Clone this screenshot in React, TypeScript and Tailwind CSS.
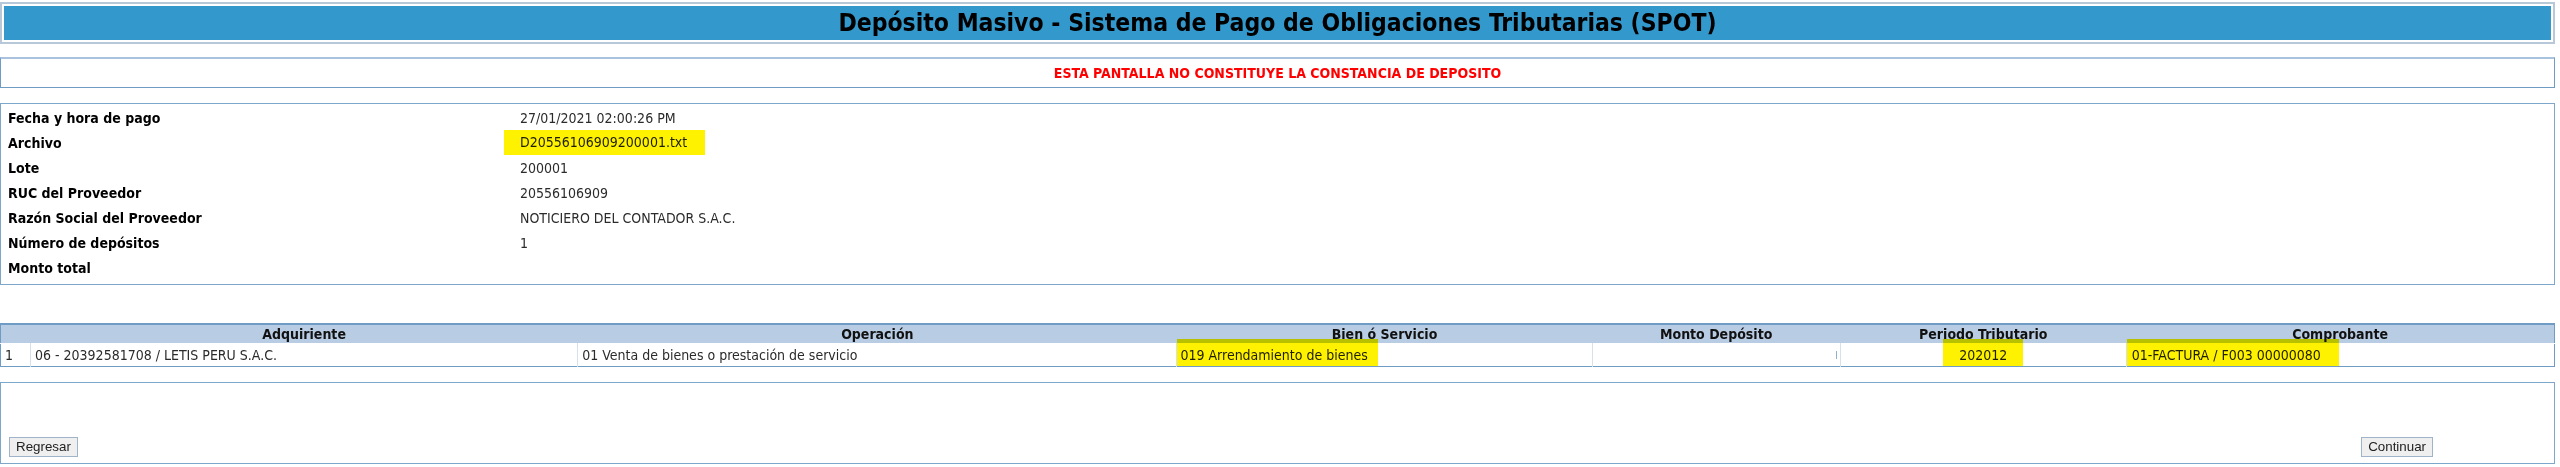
import type { ReactNode } from 'react'

const FONT = '"DejaVu Sans Condensed", "DejaVu Sans", sans-serif'

const INFO_ROWS: { label: string; value: string; mark?: boolean }[] = [
  { label: 'Fecha y hora de pago', value: '27/01/2021 02:00:26 PM' },
  { label: 'Archivo', value: 'D20556106909200001.txt', mark: true },
  { label: 'Lote', value: '200001' },
  { label: 'RUC del Proveedor', value: '20556106909' },
  { label: 'Razón Social del Proveedor', value: 'NOTICIERO DEL CONTADOR S.A.C.' },
  { label: 'Número de depósitos', value: '1' },
  { label: 'Monto total', value: '' },
]

const COLS = [
  { title: '', width: 30 },
  { title: 'Adquiriente', width: 547 },
  { title: 'Operación', width: 599 },
  { title: 'Bien ó Servicio', width: 415 },
  { title: 'Monto Depósito', width: 248 },
  { title: 'Periodo Tributario', width: 286 },
  { title: 'Comprobante', width: 428 },
]

// yellow highlighter mark drawn over the screenshot
function Mark({ children, className }: { children: ReactNode; className?: string }) {
  return (
    <span className={`relative inline-block bg-[#fff200] mix-blend-multiply text-[#1f1f00] ${className ?? ''}`}>
      {children}
    </span>
  )
}

function Button({ children }: { children: ReactNode }) {
  return (
    <button
      type="button"
      className="h-[20px] border border-[#9fb4c9] bg-[#efefef] px-[6px] text-[13.33px] leading-[18px] text-[#222]"
      style={{ fontFamily: '"Liberation Sans", Arial, sans-serif' }}
    >
      {children}
    </button>
  )
}

export default function App() {
  return (
    <div className="w-[2555px] bg-white pt-[2px] text-[14px] text-[#2b2b2b]" style={{ fontFamily: FONT }}>
      <div className="border-2 border-[#b7c8d9] p-[2px]">
        <div className="flex h-[34px] items-center justify-center bg-[#3399cc]">
          <h1 className="text-[24.5px] font-bold leading-none text-black">
            Depósito Masivo - Sistema de Pago de Obligaciones Tributarias (SPOT)
          </h1>
        </div>
      </div>

      <div className="mt-[13px] flex h-[31px] items-center justify-center border border-t-2 border-[#6f9cc5] border-t-[#a9c3de]">
        <span className="text-[14px] font-bold text-[#ff0000]">
          ESTA PANTALLA NO CONSTITUYE LA CONSTANCIA DE DEPOSITO
        </span>
      </div>

      <div className="mt-[15px] border border-[#7ea7cc] pb-[3px] pl-[7px] pt-[2px]">
        {INFO_ROWS.map((r) => (
          <div key={r.label} className="grid h-[25px] grid-cols-[512px_1fr] items-center">
            <span className="font-bold text-black">{r.label}</span>
            <span>
              {r.mark ? (
                <Mark className="-ml-[16px] -mt-[2px] h-[25px] pl-[16px] pr-[18px] leading-[25px]">{r.value}</Mark>
              ) : (
                r.value
              )}
            </span>
          </div>
        ))}
      </div>

      <table className="mt-[38px] w-full table-fixed border-collapse border border-t-2 border-[#6f9cc5]">
        <colgroup>
          {COLS.map((c, i) => (
            <col key={i} style={{ width: c.width }} />
          ))}
        </colgroup>
        <thead>
          <tr className="h-[18px] bg-[#b8cce4]">
            <th />
            {COLS.slice(1).map((c) => (
              <th key={c.title} className="p-0 text-center text-[14px] font-bold leading-[18px] text-[#111]">
                {c.title}
              </th>
            ))}
          </tr>
        </thead>
        <tbody>
          <tr className="h-[22px] border-t border-white">
            <td className="pl-[4px]">1</td>
            <td className="border-l border-[#d6e1ec] pl-[4px]">06 - 20392581708 / LETIS PERU S.A.C.</td>
            <td className="border-l border-[#d6e1ec] pl-[4px]">01 Venta de bienes o prestación de servicio</td>
            <td className="border-l border-[#d6e1ec] p-0">
              <Mark className="-mt-[5px] h-[27px] pl-[3px] pr-[10px] pt-[5px] leading-[22px]">019 Arrendamiento de bienes</Mark>
            </td>
            <td className="border-l border-[#d6e1ec] p-0">
              <div className="flex h-[22px] items-center justify-end pr-[3px]">
                <span className="h-[8px] w-px bg-[#8fb0cf]" />
              </div>
            </td>
            <td className="border-l border-[#d6e1ec] p-0 text-center">
              <Mark className="-mt-[5px] h-[27px] w-[80px] pt-[5px] leading-[22px]">202012</Mark>
            </td>
            <td className="border-l border-[#d6e1ec] p-0">
              <Mark className="-mt-[5px] h-[27px] pl-[5px] pr-[18px] pt-[5px] leading-[22px]">01-FACTURA / F003 00000080</Mark>
            </td>
          </tr>
        </tbody>
      </table>

      <div className="mt-[15px] flex h-[82px] items-end justify-between border border-[#7ea7cc] pb-[6px] pl-[8px] pr-[121px]">
        <Button>Regresar</Button>
        <Button>Continuar</Button>
      </div>
    </div>
  )
}
